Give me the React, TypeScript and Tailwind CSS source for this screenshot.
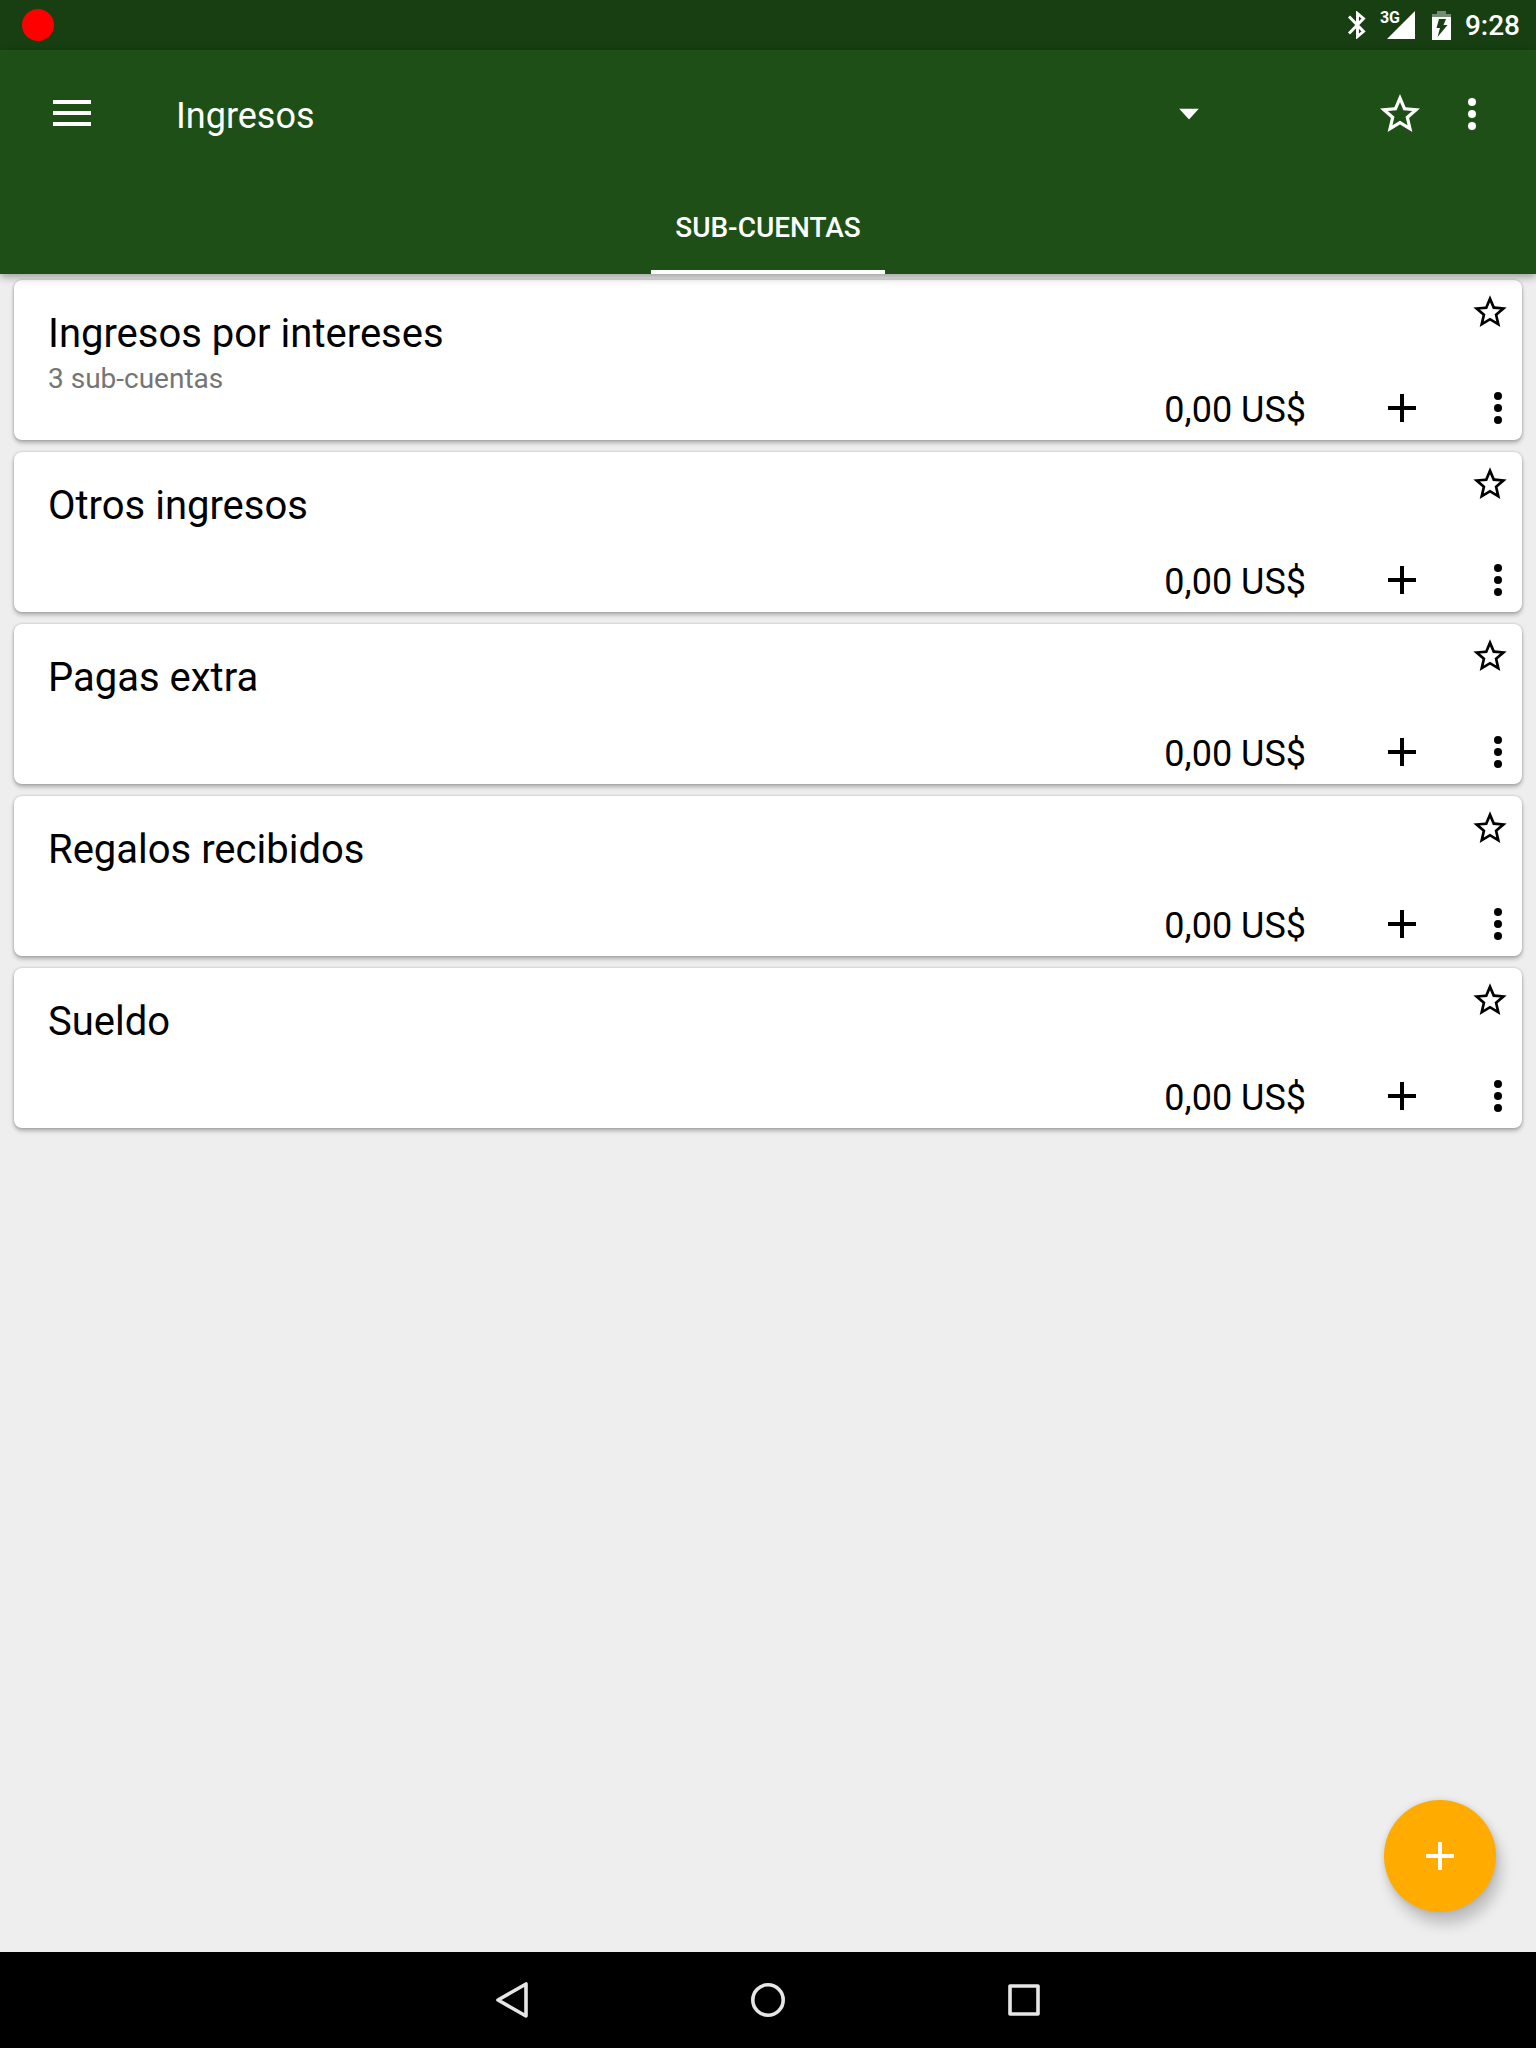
import React, { useState } from "react";

type Account = { name: string; detail?: string; balance: string };

const accounts: Account[] = [
  { name: "Ingresos por intereses", detail: "3 sub-cuentas", balance: "0,00 US$" },
  { name: "Otros ingresos", balance: "0,00 US$" },
  { name: "Pagas extra", balance: "0,00 US$" },
  { name: "Regalos recibidos", balance: "0,00 US$" },
  { name: "Sueldo", balance: "0,00 US$" },
];

function StarIcon({ className }: { className: string }) {
  return (
    <svg viewBox="0 0 24 24" fill="currentColor" className={className} aria-hidden="true">
      <path d="M22 9.24l-7.19-.62L12 2 9.19 8.63 2 9.24l5.46 4.73L5.82 21 12 17.27 18.18 21l-1.63-7.03L22 9.24zM12 15.4l-3.76 2.27 1-4.28-3.32-2.88 4.38-.38L12 6.1l1.71 4.04 4.38.38-3.32 2.88 1 4.28L12 15.4z" />
    </svg>
  );
}

function MoreIcon() {
  return (
    <svg viewBox="0 0 24 24" fill="currentColor" className="size-12" aria-hidden="true">
      <circle cx="12" cy="6" r="2" />
      <circle cx="12" cy="12" r="2" />
      <circle cx="12" cy="18" r="2" />
    </svg>
  );
}

function PlusIcon() {
  return (
    <svg viewBox="0 0 24 24" fill="currentColor" className="size-12" aria-hidden="true">
      <path d="M19 13h-6v6h-2v-6H5v-2h6V5h2v6h6v2z" />
    </svg>
  );
}

function StatusBar() {
  return (
    <div className="flex h-[50px] items-center bg-[#173f12] pr-4 pl-[22px] text-white">
      <span className="size-8 rounded-full bg-[#ff0000]" />
      <div className="ml-auto flex items-center">
        <svg viewBox="0 0 18 28" className="h-7 w-[18px]" fill="none" stroke="currentColor" strokeWidth="2.9" aria-label="Bluetooth">
          <path d="M1 5.500L15.500 20.500L9.500 25.500V2.500L15.500 7.500L1 22.500" />
        </svg>
        <div className="relative ml-[21px] h-7 w-7">
          <svg viewBox="0 0 28 28" className="size-7" fill="currentColor" aria-hidden="true">
            <path d="M28 0V28H0z" />
          </svg>
          <span className="absolute top-0 -left-[7px] text-[16px] leading-[14px] font-bold">3G</span>
        </div>
        <svg viewBox="0 0 19 29" className="ml-[17px] h-[29px] w-[19px]" aria-label="Batería">
          <path d="M5 0h9v3h5v3H0V3h5z" fill="#748c71" />
          <path fillRule="evenodd" d="M0 6H19V29H0zM7 8L4.500 17H8L5.500 26L15.500 14H11.500L14 8z" fill="currentColor" />
        </svg>
        <span className="ml-[14px] pt-0.5 text-[28px] leading-8 font-medium">9:28</span>
      </div>
    </div>
  );
}

function AccountCard({ account }: { account: Account }) {
  return (
    <li className="flex min-h-40 justify-between rounded-lg bg-white pl-[34px] text-black shadow-[0_3px_4px_rgba(0,0,0,0.26),0_0_3px_rgba(0,0,0,0.2)]">
      <div className="pt-[30px]">
        <h2 className="text-[40px] leading-[48px]">{account.name}</h2>
        {account.detail && <p className="text-[28px] leading-[42px] text-[#757575]">{account.detail}</p>}
      </div>
      <div className="flex flex-col items-end justify-between pt-3 pb-2">
        <button type="button" aria-label={`Favorita: ${account.name}`} className="mr-3">
          <StarIcon className="size-10" />
        </button>
        <div className="flex h-12 items-center">
          <span className="mr-[72px] pt-1 text-[36px] leading-[48px]">{account.balance}</span>
          <button type="button" aria-label={`Añadir a ${account.name}`} className="mr-12">
            <PlusIcon />
          </button>
          <button type="button" aria-label={`Opciones de ${account.name}`}>
            <MoreIcon />
          </button>
        </div>
      </div>
    </li>
  );
}

export default function App() {
  const [current, setCurrent] = useState("Ingresos");
  return (
    <div className="flex min-h-screen flex-col bg-[#eeeeee] font-[Roboto,sans-serif]">
      <StatusBar />
      <header className="relative z-10 bg-[#1d4f17] text-white shadow-[0_3px_8px_rgba(0,0,0,0.35)]">
        <div className="flex h-32 items-center pr-7 pl-12">
          <button type="button" aria-label="Menú" className="flex size-12 items-center justify-center pb-0.5">
            <svg viewBox="0 0 38 26" className="h-[26px] w-[38px]" fill="currentColor" aria-hidden="true">
              <path d="M0 0h38v4H0zM0 11h38v4H0zM0 22h38v4H0z" />
            </svg>
          </button>
          <div className="relative mr-36 ml-20 flex-1">
            <select
              aria-label="Cuenta"
              value={current}
              onChange={(e) => setCurrent(e.target.value)}
              className="w-full appearance-none bg-transparent pt-1 text-[36px] leading-[44px] outline-none"
            >
              <option>Ingresos</option>
            </select>
            <svg viewBox="0 0 20 11" className="pointer-events-none absolute top-1/2 right-[21px] h-[11px] w-5 -translate-y-1/2" fill="currentColor" aria-hidden="true">
              <path d="M0 0h20L10 11z" />
            </svg>
          </div>
          <button type="button" aria-label="Favorita" className="flex w-[72px] justify-center">
            <StarIcon className="size-12" />
          </button>
          <button type="button" aria-label="Más opciones" className="flex w-[72px] justify-center">
            <MoreIcon />
          </button>
        </div>
        <div role="tablist" className="flex h-24 justify-center">
          <button
            type="button"
            role="tab"
            aria-selected="true"
            className="border-b-4 border-white px-6 pt-2 text-[28px] leading-8 font-medium"
          >
            SUB-CUENTAS
          </button>
        </div>
      </header>
      <main className="relative flex-1 px-3.5 pt-1.5">
        <ul className="flex flex-col gap-3">
          {accounts.map((account) => (
            <AccountCard key={account.name} account={account} />
          ))}
        </ul>
        <button
          type="button"
          aria-label="Nueva cuenta"
          className="absolute right-10 bottom-10 flex size-28 items-center justify-center rounded-full bg-[#ffab00] text-white shadow-[5px_12px_14px_rgba(0,0,0,0.2),0_0_6px_rgba(0,0,0,0.12)]"
        >
          <PlusIcon />
        </button>
      </main>
      <nav aria-label="Sistema" className="flex h-24 justify-center bg-black text-[#e6e6e6]">
        <button type="button" aria-label="Atrás" className="flex w-64 items-center justify-center">
          <svg viewBox="0 0 48 48" className="size-12" fill="none" stroke="currentColor" strokeWidth="3.600" strokeLinejoin="round" aria-hidden="true">
            <path d="M38 8V40L10 24z" />
          </svg>
        </button>
        <button type="button" aria-label="Inicio" className="flex w-64 items-center justify-center">
          <svg viewBox="0 0 48 48" className="size-12" fill="none" stroke="currentColor" strokeWidth="3.600" aria-hidden="true">
            <circle cx="24" cy="24" r="15.200" />
          </svg>
        </button>
        <button type="button" aria-label="Recientes" className="flex w-64 items-center justify-center">
          <svg viewBox="0 0 48 48" className="size-12" fill="none" stroke="currentColor" strokeWidth="3.600" strokeLinejoin="round" aria-hidden="true">
            <rect x="10" y="10" width="28" height="28" />
          </svg>
        </button>
      </nav>
    </div>
  );
}
